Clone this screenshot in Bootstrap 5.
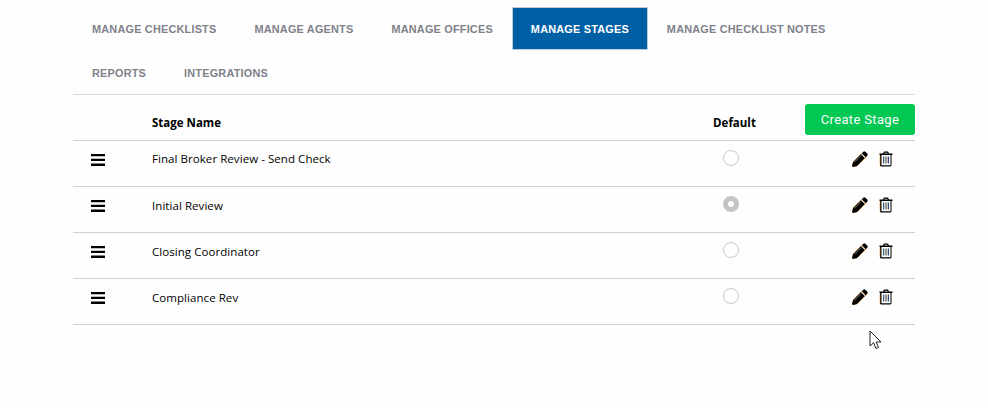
<!DOCTYPE html>
<html lang="en">
<head>
<meta charset="utf-8">
<title>Manage Stages</title>
<link rel="stylesheet" href="https://cdn.jsdelivr.net/npm/bootstrap@5.3.0/dist/css/bootstrap.min.css">
<style>
body{background:#fefefe;font-family:"Open Sans","Noto Sans",sans-serif;overflow:hidden;position:relative;height:408px}
.page-wrap{width:842px;margin-left:73px;padding-top:7px}
.tab-bar{border-bottom:1px solid #dcdce0;height:88px;align-content:flex-start}
.tab-bar .nav-item{margin-bottom:1px}
.tab-bar .nav-link{font-family:"Liberation Sans",Arial,sans-serif;font-weight:700;font-size:10.9px;letter-spacing:.2px;color:#7f818b;text-transform:uppercase;height:43px;line-height:43px;padding:0 18px;border:1px solid transparent;border-radius:0;white-space:nowrap}
.tab-bar .nav-link.active{background:#0060a6;color:#fff;border-color:#c4cbd8}
.stage-grid{margin:0;width:100%;table-layout:fixed;--bs-table-bg:transparent}
.stage-grid th,.stage-grid td{border-bottom:1px solid #cfcfd8;padding:0;vertical-align:top;color:#000;font-size:11.5px}
.stage-grid thead th{height:45px;font-weight:700;font-size:11.5px;vertical-align:top}
.stage-grid tbody tr{height:46px}
.head-text{display:block;padding-top:20px;line-height:16px}
.cell-text{display:block;padding-top:11px;line-height:16px;letter-spacing:.06px}
.stage-grid tbody tr:first-child .cell-text{padding-top:10px}
.col-handle{width:79px}.col-default{width:110px}.col-acts{width:130px}
.default-head{text-align:center;padding-left:9px!important}
.grip{display:block;margin:13px 0 0 18px}
.create-btn{background:#00c853;border:0;border-radius:3px;color:#fff;font-family:Roboto,"Liberation Sans",sans-serif;font-size:13px;font-weight:400;letter-spacing:.35px;width:110px;height:31px;padding:0;margin-top:9px}
.radio-dot{display:block;width:16px;height:16px;border-radius:50%;border:1px solid #c8c8cc;background:#fff;margin:9px 0 0 48px}
.radio-dot.on{border:5px solid #c4c4c8}
.acts{gap:11px;padding:10px 22px 0 0}
.pointer-mark{position:absolute;left:869px;top:330px}
</style>
</head>
<body>
<div class="page-wrap">
  <ul class="nav tab-bar">
    <li class="nav-item"><a class="nav-link" href="#">Manage Checklists</a></li>
    <li class="nav-item"><a class="nav-link" href="#">Manage Agents</a></li>
    <li class="nav-item"><a class="nav-link" href="#">Manage Offices</a></li>
    <li class="nav-item"><a class="nav-link active" href="#">Manage Stages</a></li>
    <li class="nav-item"><a class="nav-link" href="#">Manage Checklist Notes</a></li>
    <li class="nav-item"><a class="nav-link" href="#">Reports</a></li>
    <li class="nav-item"><a class="nav-link" href="#">Integrations</a></li>
  </ul>
  <table class="table stage-grid">
    <colgroup><col class="col-handle"><col><col class="col-default"><col class="col-acts"></colgroup>
    <thead>
      <tr>
        <th></th>
        <th><span class="head-text">Stage Name</span></th>
        <th class="default-head"><span class="head-text">Default</span></th>
        <th class="text-end"><button class="btn create-btn" type="button">Create Stage</button></th>
      </tr>
    </thead>
    <tbody id="rows"></tbody>
  </table>
</div>
<svg class="pointer-mark" width="14" height="20" viewBox="0 0 14 20"><path d="M1 1V16L4.500 12.800L7 18.500L9.500 17.500L7.200 12H12Z" fill="#fff" stroke="#222" stroke-width="1"/></svg>
<template id="row-t">
  <tr>
    <td><svg class="grip" width="14" height="12" viewBox="0 0 14 12"><path d="M0 0h14v2.300H0zM0 4.800h14v2.300H0zM0 9.600h14v2.300H0z" fill="#000"/></svg></td>
    <td><span class="cell-text"></span></td>
    <td><span class="radio-dot"></span></td>
    <td>
      <div class="d-flex justify-content-end acts">
        <svg width="16" height="16" viewBox="0 0 16 16"><path d="M.6 15.500 1.500 10.800 10 2.300 13.800 6.100 5.300 14.600Z" fill="none" stroke="#e8902a" stroke-width="1"/><path d="M11.300.800a1.500 1.500 0 0 1 2.100 0l1.800 1.800a1.500 1.500 0 0 1 0 2.100L13.700 6.200 9.800 2.300zM8.900 3.200l3.900 3.900L5 14.900 1 16 0 15l1.100-4z" fill="#000"/><path d="M2.300 11.300 8.800 4.800" stroke="#fff" stroke-width=".5"/></svg>
        <svg width="14" height="16" viewBox="0 0 14 16"><path d="M5 .5h4l1 2h3.500v1.500h-1V14a1.500 1.500 0 0 1-1.500 1.500H2.500A1.500 1.500 0 0 1 1 14V4H.5V2.500H4zM5.700 1.800 5.300 2.500h3.400l-.4-.7zM2.500 4v10a.3.3 0 0 0 .3.300h8.400a.3.3 0 0 0 .3-.3V4z" fill="#000"/><path d="M4 5.500h1.300v7H4z" fill="#3a5f90"/><path d="M6.350 5.500h1.300v7h-1.300z" fill="#6a6a50"/><path d="M8.700 5.500H10v7H8.700z" fill="#2c4a80"/><path d="M1 4.500v9.500" stroke="#e8902a" stroke-width=".6"/></svg>
      </div>
    </td>
  </tr>
</template>
<script>
var names=["Final Broker Review - Send Check","Initial Review","Closing Coordinator","Compliance Rev"];
var t=document.getElementById("row-t"),b=document.getElementById("rows");
names.forEach(function(n,i){var c=t.content.cloneNode(true);c.querySelector(".cell-text").textContent=n;if(i===1)c.querySelector(".radio-dot").classList.add("on");b.appendChild(c);});
</script>
<script src="https://cdn.jsdelivr.net/npm/bootstrap@5.3.0/dist/js/bootstrap.bundle.min.js"></script>
</body>
</html>
